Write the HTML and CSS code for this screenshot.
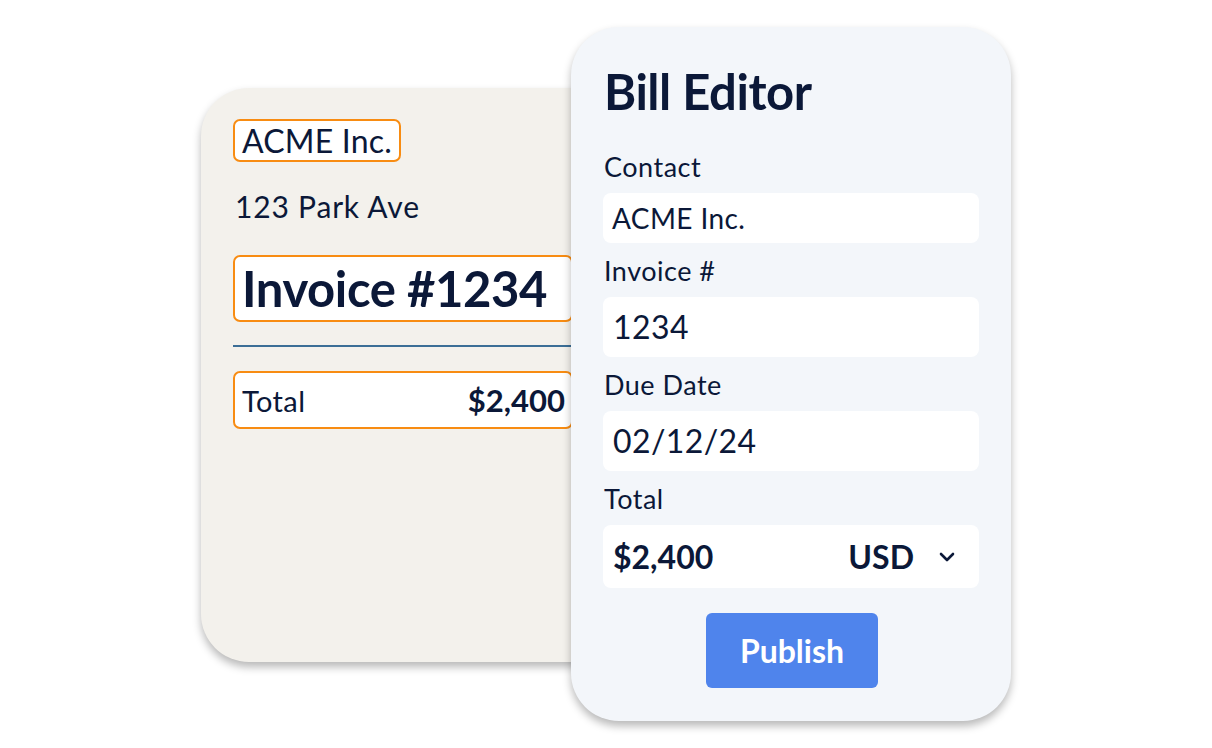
FILE: index.html
```html
<!DOCTYPE html>
<html lang="en">
<head>
<meta charset="utf-8">
<title>Bill Editor</title>
<link rel="stylesheet" href="styles.css">
</head>
<body>
<div class="stage">
  <div class="invoice-card">
    <div class="tag">ACME Inc.</div>
    <div class="address">123 Park Ave</div>
    <div class="invoice-title">Invoice #1234</div>
    <div class="rule"></div>
    <div class="total-row">
      <span class="total-label">Total</span>
      <span class="total-amount">$2,400</span>
    </div>
  </div>
  <div class="editor-card">
    <h1 class="editor-title">Bill Editor</h1>
    <div class="field-label first">Contact</div>
    <div class="field field-sm">ACME Inc.</div>
    <div class="field-label">Invoice #</div>
    <div class="field">1234</div>
    <div class="field-label">Due Date</div>
    <div class="field">02/12/24</div>
    <div class="field-label">Total</div>
    <div class="field field-total">
      <span class="amount">$2,400</span>
      <span class="currency">USD</span>
      <svg class="chevron" width="16" height="10" viewBox="0 0 16 10"><path d="M2 2 L8 8 L14 2" fill="none" stroke="#0b1838" stroke-width="2.6" stroke-linecap="round" stroke-linejoin="round"/></svg>
    </div>
    <div class="actions"><button class="publish">Publish</button></div>
  </div>
</div>
</body>
</html>
```

FILE: styles.css
```css
* { box-sizing: border-box; }
html, body { margin: 0; padding: 0; background: #ffffff; }
body {
  font-family: "Lato", "Open Sans", sans-serif;
  color: #0b1838;
  width: 1212px;
  height: 748px;
  overflow: hidden;
}
.stage {
  display: flex;
  align-items: flex-start;
  padding-left: 201px;
}
.invoice-card {
  width: 420px;
  height: 574px;
  margin-top: 88px;
  background: #f3f1ec;
  border-radius: 48px;
  padding: 31px 48px 0 32px;
  box-shadow: 0 5px 8px rgba(0, 0, 0, 0.28);
  flex-shrink: 0;
}
.tag {
  display: inline-block;
  height: 43px;
  line-height: 39px;
  font-size: 32px;
  padding: 0 7px;
  border: 2px solid #f88c12;
  border-radius: 7px;
  background: #ffffff;
  letter-spacing: 0.2px;
}
.address {
  margin-top: 26px;
  font-size: 30px;
  line-height: 36px;
  padding-left: 2px;
  letter-spacing: 0.8px;
}
.invoice-title {
  margin-top: 31px;
  height: 67px;
  line-height: 63px;
  font-size: 49px;
  font-weight: 700;
  letter-spacing: -0.4px;
  padding: 0 7px;
  border: 2px solid #f88c12;
  border-radius: 7px;
  background: #ffffff;
}
.rule {
  margin-top: 23px;
  height: 2px;
  background: #3b6e96;
}
.total-row {
  margin-top: 24px;
  height: 58px;
  border: 2px solid #f88c12;
  border-radius: 7px;
  background: #ffffff;
  display: flex;
  align-items: center;
  justify-content: space-between;
  padding: 0 6px 0 7px;
}
.total-label { font-size: 29px; letter-spacing: 0.4px; }
.total-amount { font-size: 31px; font-weight: 700; }

.editor-card {
  position: relative;
  z-index: 1;
  margin-left: -50px;
  margin-top: 27px;
  width: 440px;
  height: 694px;
  background: #f3f6fa;
  border-radius: 48px;
  padding: 36px 32px 0 33px;
  box-shadow: 0 5px 9px rgba(0, 0, 0, 0.28);
  flex-shrink: 0;
}
.editor-title {
  margin: 0;
  font-size: 49px;
  line-height: 56px;
  font-weight: 700;
  letter-spacing: -0.45px;
}
.field-label {
  margin-top: 12px;
  font-size: 27px;
  line-height: 32px;
  letter-spacing: 0.5px;
}
.field-label.first { margin-top: 32px; }
.field {
  margin-top: 10px;
  height: 60px;
  line-height: 60px;
  background: #ffffff;
  border-radius: 8px;
  font-size: 32px;
  padding-left: 10px;
  margin-left: -1px;
  letter-spacing: 0.4px;
}
.field-sm {
  height: 50px;
  line-height: 50px;
  font-size: 28px;
  padding-left: 9px;
}
.field-total {
  height: 63px;
  display: flex;
  align-items: center;
  font-weight: 700;
  padding-right: 24px;
  letter-spacing: 0;
}
.field-total .amount { flex: 1; }
.field-total .currency { margin-right: 25px; }
.chevron { display: block; }
.actions {
  margin-top: 25px;
  display: flex;
  justify-content: center;
}
.publish {
  width: 172px;
  height: 75px;
  border: none;
  border-radius: 6px;
  background: #4f84ec;
  color: #ffffff;
  font-family: "Lato", "Open Sans", sans-serif;
  font-size: 32px;
  font-weight: 700;
  padding: 0;
  margin-left: 1px;
}
```
